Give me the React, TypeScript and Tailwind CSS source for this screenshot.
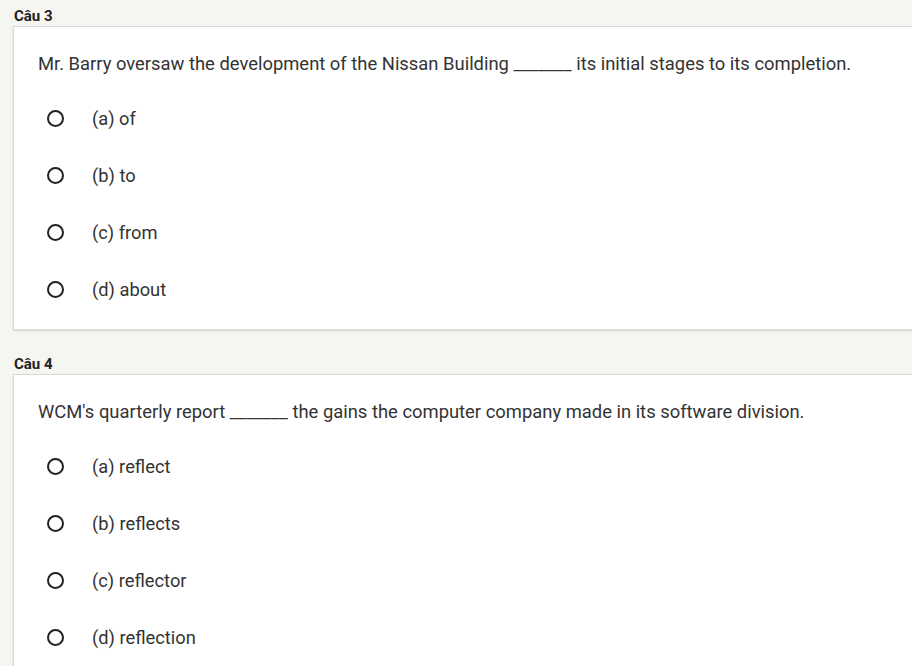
import React from "react";

type Q = { label: string; text: string[]; options: string[] };

const questions: Q[] = [
  {
    label: "Câu 3",
    text: ["Mr. Barry oversaw the development of the Nissan Building ", "_______", " its initial stages to its completion."],
    options: ["(a) of", "(b) to", "(c) from", "(d) about"],
  },
  {
    label: "Câu 4",
    text: ["WCM's quarterly report ", "_______", " the gains the computer company made in its software division."],
    options: ["(a) reflect", "(b) reflects", "(c) reflector", "(d) reflection"],
  },
];

function Radio() {
  return <span className="block w-[17px] h-[17px] rounded-full border-2 border-[#222] shrink-0" />;
}

export default function App() {
  return (
    <div
      className="w-[912px] h-[666px] overflow-hidden bg-[#f5f5f2] pl-[13px] pt-[6px]"
      style={{ fontFamily: "Roboto, 'Liberation Sans', sans-serif" }}
    >
      {questions.map((q, i) => (
        <div key={i} className={i === 0 ? "" : "mt-[24px]"}>
          <div className="h-[20px] text-[15px] font-bold text-[#222] pl-px leading-[20px]">{q.label}</div>
          <div className="w-[920px] bg-white border border-[#dadada] shadow-[0_1px_2px_rgba(0,0,0,0.12)] pl-[24px] pt-[24px] pb-[11px]">
            <div className="text-[18.4px] text-[#333] leading-[26px]">
              {q.text[0]}
              <span>{q.text[1]}</span>
              {q.text[2]}
            </div>
            <div className="mt-[13px] flex flex-col">
              {q.options.map((o) => (
                <div key={o} className="h-[57px] flex items-center">
                  <span className="ml-[9px]">
                    <Radio />
                  </span>
                  <span className="ml-[28px] text-[18.3px] text-[#333]">{o}</span>
                </div>
              ))}
            </div>
          </div>
        </div>
      ))}
    </div>
  );
}
